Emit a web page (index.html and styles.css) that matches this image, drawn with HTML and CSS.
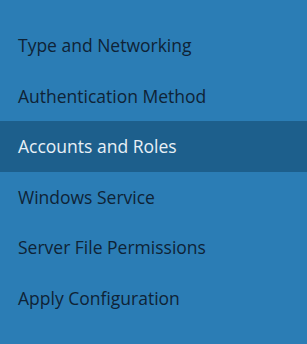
FILE: index.html
```html
<!DOCTYPE html>
<html>
<head>
    <meta charset="utf-8">
    <link rel="stylesheet" href="styles.css">
</head>
<body>
<ul class="step_list">
    <li class="step_item">Type and Networking</li>
    <li class="step_item">Authentication Method</li>
    <li class="step_item is_active">Accounts and Roles</li>
    <li class="step_item">Windows Service</li>
    <li class="step_item">Server File Permissions</li>
    <li class="step_item">Apply Configuration</li>
</ul>
</body>
</html>
```

FILE: styles.css
```css
html, body {
    margin: 0;
    height: 100%;
    background-color: #2b7db5;
}

.step_list {
    margin: 0;
    padding: 20px 0 0;
    list-style: none;
    font-family: "Open Sans", "Noto Sans", sans-serif;
    font-size: 17.5px;
}

.step_item {
    height: 50.5px;
    line-height: 50px;
    padding: 0 0 0 18px;
    color: #0f2336;
}

.step_item.is_active {
    background-color: #1d5f8c;
    color: #e8f0f6;
}
```
